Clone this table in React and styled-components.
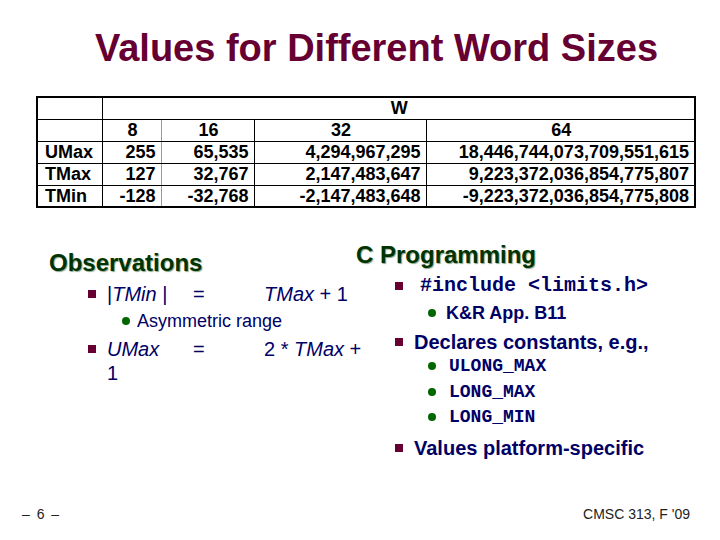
import React from 'react';
import styled, { createGlobalStyle } from 'styled-components';

const GlobalStyle = createGlobalStyle`
  html, body {
    margin: 0;
    padding: 0;
    background: #fff;
  }
  body {
    font-family: "Liberation Sans", Arial, sans-serif;
  }
`;

const Slide = styled.div`
  width: 720px;
  height: 540px;
  display: flex;
  flex-direction: column;
  background: #fff;
  overflow: hidden;
`;

const Title = styled.h1`
  margin: 0;
  padding: 26px 0 0 33px;
  font-size: 38px;
  line-height: 45px;
  font-weight: bold;
  color: #660033;
  text-align: center;
`;

const Table = styled.table`
  margin: 25px 0 0 36px;
  width: 658px;
  border-collapse: collapse;
  border: 2px solid #000;
  table-layout: fixed;
`;

const Row = styled.tr`
  height: 22px;
`;

const Cell = styled.td`
  border: 1px solid #000;
  padding: 0 5px 0 7px;
  font-size: 18px;
  line-height: 20px;
  font-weight: bold;
  color: #000;
  white-space: nowrap;
  text-align: ${({ $align }) => $align || 'right'};
  ${({ $soft }) => $soft && 'border-right-color: #9a9a9a;'}
`;

const Columns = styled.div`
  display: flex;
`;

const Column = styled.div`
  box-sizing: border-box;
  width: ${({ $width }) => ($width ? `${$width}px` : 'auto')};
  flex: ${({ $width }) => ($width ? 'none' : '1')};
  padding-left: ${({ $indent }) => $indent}px;
`;

const Heading = styled.h2`
  margin: ${({ $top }) => $top}px 0 0;
  font-size: 24px;
  line-height: 28px;
  font-weight: bold;
  color: #003300;
  text-shadow: 1px 1px 1px #8da58d;
  white-space: nowrap;
`;

const Item = styled.div`
  display: flex;
  align-items: flex-start;
  margin-top: ${({ $top }) => $top || 0}px;
  padding-left: ${({ $indent }) => $indent}px;
  font-size: ${({ $size }) => $size || 20}px;
  line-height: 24px;
  font-weight: ${({ $bold }) => ($bold ? 'bold' : 'normal')};
  color: #000066;
  white-space: nowrap;
`;

const Square = styled.span`
  flex: none;
  width: 8px;
  height: 8px;
  margin: 8px 11px 0 0;
  background: #660033;
`;

const Dot = styled.span`
  flex: none;
  width: 8px;
  height: 8px;
  margin: 8px ${({ $gap }) => $gap || 7}px 0 0;
  border-radius: 50%;
  background: #006600;
`;

const Tab = styled.span`
  display: inline-block;
  width: ${({ $w }) => $w}px;
`;

const Mono = styled.span`
  font-family: "Liberation Mono", "Courier New", monospace;
  font-weight: bold;
  margin-left: ${({ $shift }) => $shift || 0}px;
`;

const Footer = styled.div`
  margin-top: auto;
  display: flex;
  justify-content: space-between;
  padding: 0 30px 18px 22px;
  font-size: 14px;
  line-height: 16px;
  color: #222;
`;

const PageNumber = styled.span`
  letter-spacing: 1.5px;
`;

const rows = [
  ['UMax', '255', '65,535', '4,294,967,295', '18,446,744,073,709,551,615'],
  ['TMax', '127', '32,767', '2,147,483,647', '9,223,372,036,854,775,807'],
  ['TMin', '-128', '-32,768', '-2,147,483,648', '-9,223,372,036,854,775,808'],
];

function App() {
  return (
    <Slide>
      <GlobalStyle />
      <Title>Values for Different Word Sizes</Title>

      <Table>
        <colgroup>
          <col style={{ width: 65 }} />
          <col style={{ width: 59 }} />
          <col style={{ width: 93 }} />
          <col style={{ width: 172 }} />
          <col style={{ width: 269 }} />
        </colgroup>
        <tbody>
          <Row>
            <Cell />
            <Cell colSpan={4} $align="center">W</Cell>
          </Row>
          <Row>
            <Cell />
            <Cell $align="center" $soft>8</Cell>
            <Cell $align="center">16</Cell>
            <Cell $align="center">32</Cell>
            <Cell $align="center">64</Cell>
          </Row>
          {rows.map((r) => (
            <Row key={r[0]}>
              <Cell $align="left">{r[0]}</Cell>
              <Cell $soft>{r[1]}</Cell>
              <Cell>{r[2]}</Cell>
              <Cell>{r[3]}</Cell>
              <Cell>{r[4]}</Cell>
            </Row>
          ))}
        </tbody>
      </Table>

      <Columns>
        <Column $width={356} $indent={49}>
          <Heading $top={41}>Observations</Heading>
          <Item $indent={39} $top={5}>
            <Square />
            <span>
              <Tab $w={86}>|<i>TMin</i> |</Tab>
              <Tab $w={71}>=</Tab>
              <i>TMax</i> + 1
            </span>
          </Item>
          <Item $indent={73} $top={3} $size={18}>
            <Dot />
            <span>Asymmetric range</span>
          </Item>
          <Item $indent={39} $top={4}>
            <Square />
            <span>
              <Tab $w={86}><i>UMax</i></Tab>
              <Tab $w={71}>=</Tab>
              2 * <i>TMax</i> +
              <br />
              1
            </span>
          </Item>
        </Column>

        <Column $indent={0}>
          <Heading $top={33}>C Programming</Heading>
          <Item $indent={39} $top={5}>
            <Square />
            <Mono $shift={6}>#include &lt;limits.h&gt;</Mono>
          </Item>
          <Item $indent={72} $top={3} $size={18} $bold>
            <Dot $gap={10} />
            <span>K&amp;R App. B11</span>
          </Item>
          <Item $indent={39} $top={5} $bold>
            <Square />
            <span>Declares constants, e.g.,</span>
          </Item>
          <Item $indent={72} $size={18}>
            <Dot $gap={13} />
            <Mono>ULONG_MAX</Mono>
          </Item>
          <Item $indent={72} $top={2} $size={18}>
            <Dot $gap={13} />
            <Mono>LONG_MAX</Mono>
          </Item>
          <Item $indent={72} $top={1} $size={18}>
            <Dot $gap={13} />
            <Mono>LONG_MIN</Mono>
          </Item>
          <Item $indent={39} $top={7} $bold>
            <Square />
            <span>Values platform-specific</span>
          </Item>
        </Column>
      </Columns>

      <Footer>
        <PageNumber>– 6 –</PageNumber>
        <span>CMSC 313, F '09</span>
      </Footer>
    </Slide>
  );
}

export default App;
